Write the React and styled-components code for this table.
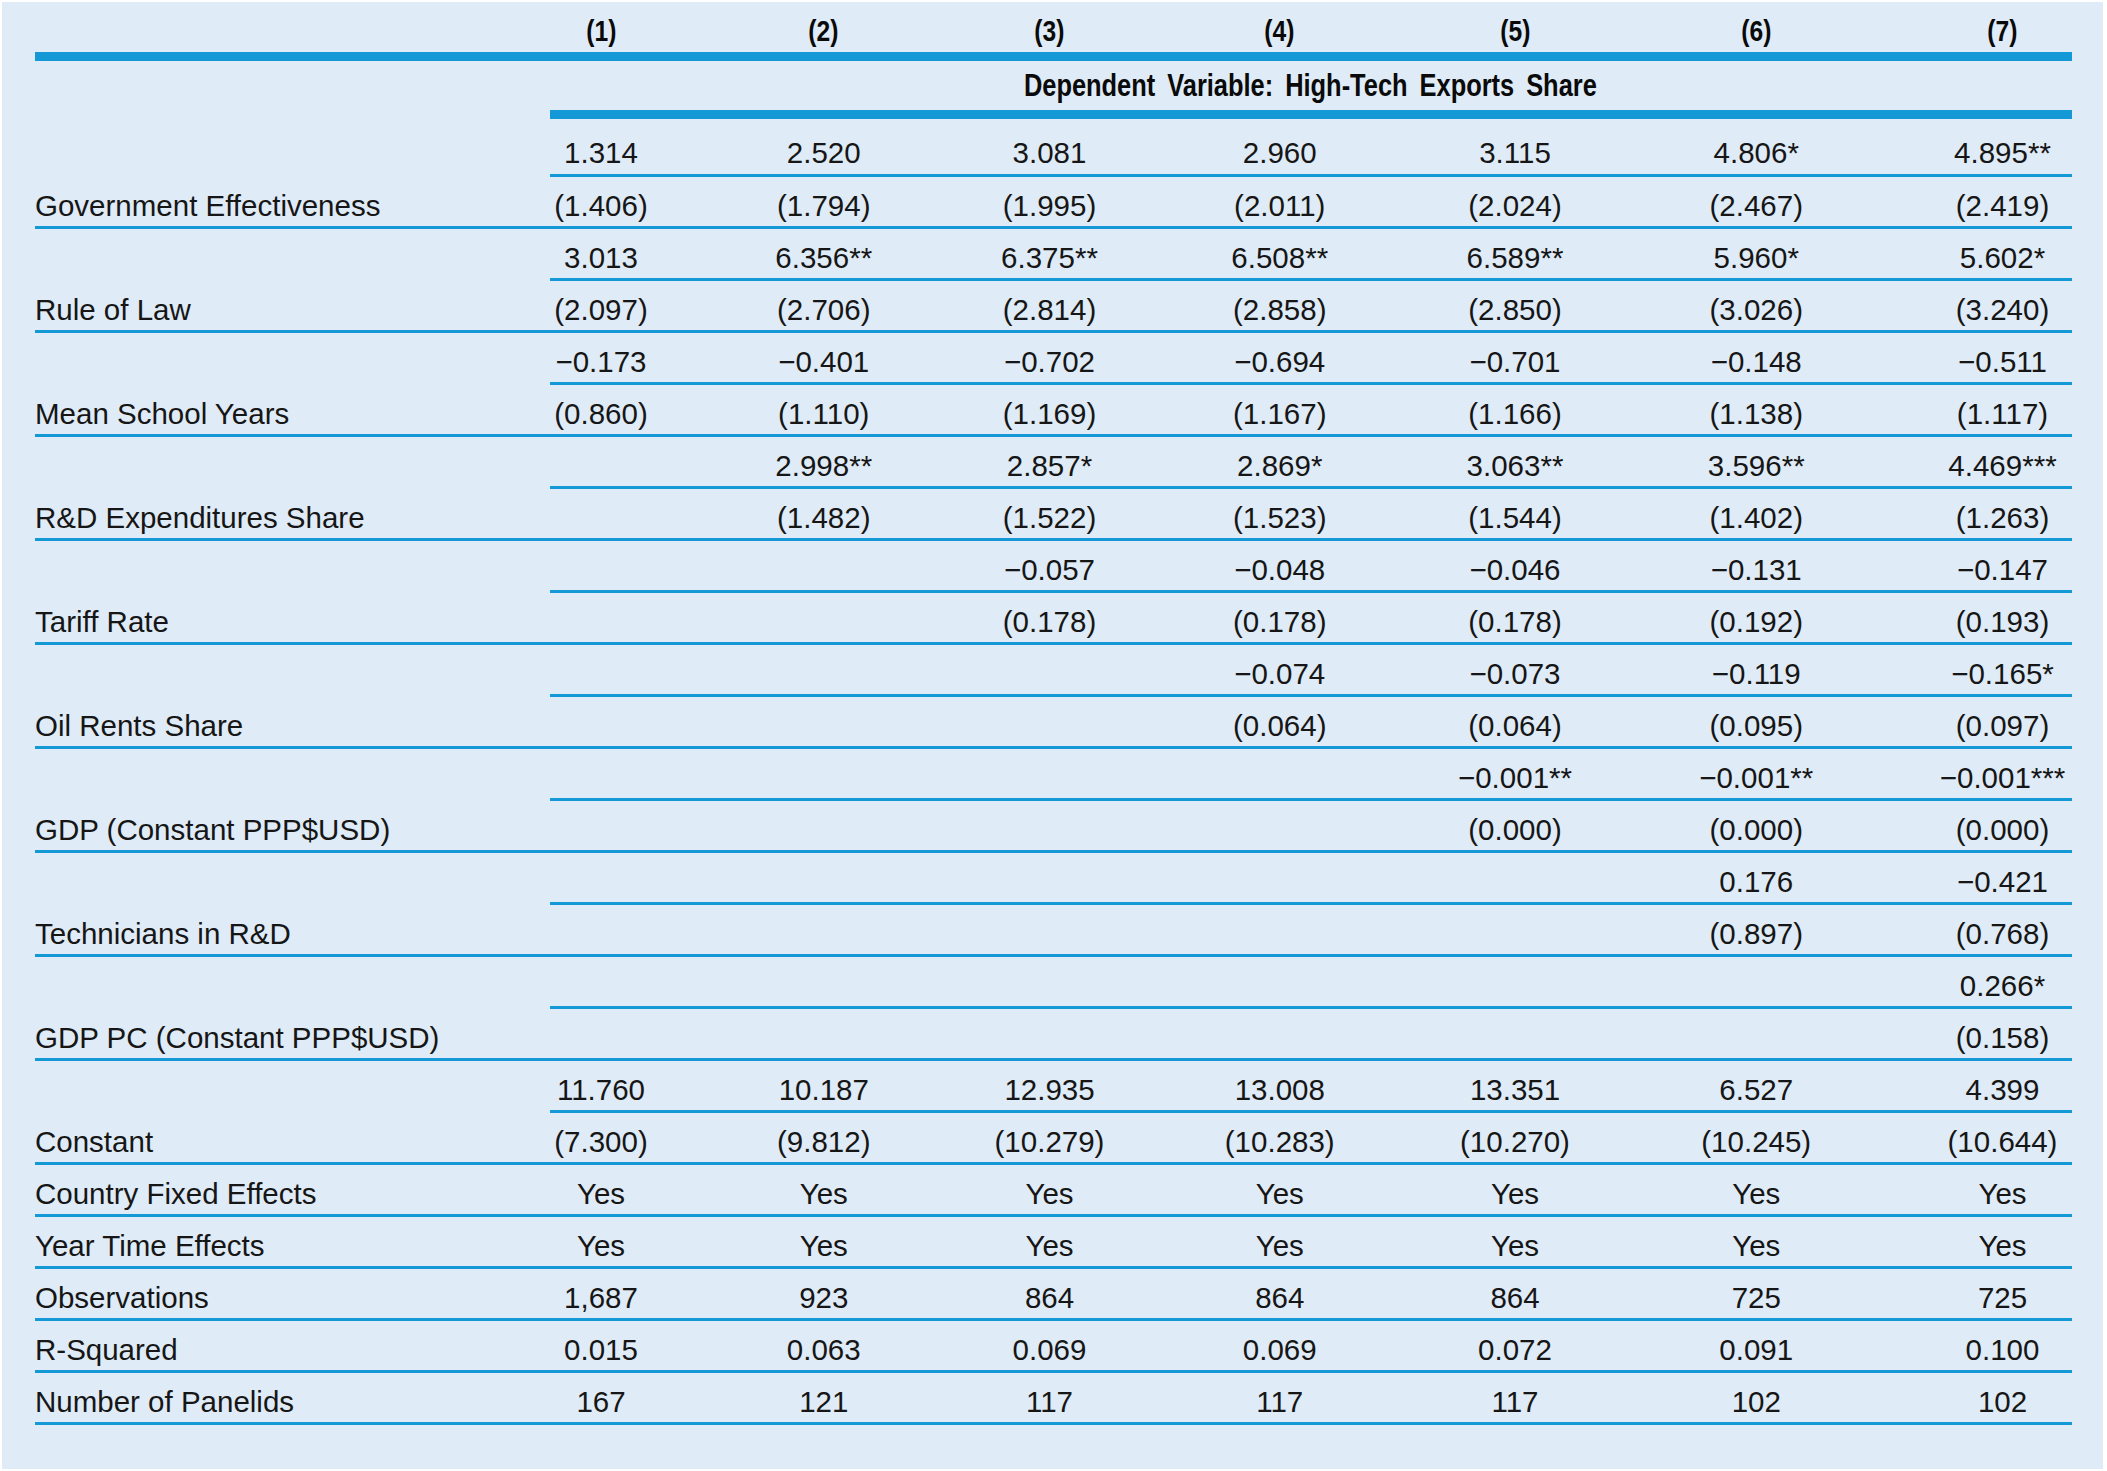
import React from 'react';
import styled, { createGlobalStyle } from 'styled-components';

const BLUE = '#1499d6';
const COLS = '515px 162px 223.5px 228px 232.5px 238px 244.5px 193px';

const GlobalStyle = createGlobalStyle`
  html, body {
    margin: 0;
    padding: 0;
    background: #ffffff;
  }
  body {
    font-family: "Liberation Sans", Arial, sans-serif;
  }
`;

const Panel = styled.div`
  box-sizing: border-box;
  width: 2101px;
  height: 1467px;
  margin: 2px;
  padding-left: 33px;
  background: #dfebf6;
`;

const Row = styled.div`
  display: grid;
  grid-template-columns: ${COLS};
  width: 2036.5px;
  height: ${p => p.$h}px;
  --rule: ${p => p.$rule}px;
  --pt: ${p => p.$pt}px;
`;

const LabelCell = styled.div`
  box-sizing: border-box;
  display: flex;
  align-items: center;
  padding-top: var(--pt);
  border-bottom: var(--rule) solid ${p => (p.$ruled ? BLUE : 'transparent')};
  font-size: 29.5px;
  color: #161616;
  white-space: nowrap;
`;

const ValueCell = styled.div`
  box-sizing: border-box;
  display: flex;
  align-items: center;
  justify-content: center;
  padding-top: var(--pt);
  border-bottom: var(--rule) solid ${BLUE};
  font-size: 29.5px;
  color: #161616;
  white-space: nowrap;

  &:nth-child(2) {
    padding-right: 60px;
  }
  &:last-child {
    padding-left: 55px;
  }
`;

const HeadCell = styled(ValueCell)`
  font-weight: 700;
  font-size: 30px;
  color: #0a0a0a;
`;

const SpanCell = styled.div`
  grid-column: 2 / -1;
  box-sizing: border-box;
  display: flex;
  align-items: center;
  justify-content: center;
  border-bottom: var(--rule) solid ${BLUE};
  font-weight: 700;
  font-size: 31px;
  word-spacing: 6px;
  color: #0a0a0a;
  white-space: nowrap;
`;

const Condensed = styled.span`
  display: inline-block;
  transform: scaleX(${p => p.$x});
`;

const variables = [
  {
    name: 'Government Effectiveness',
    coef: ['1.314', '2.520', '3.081', '2.960', '3.115', '4.806*', '4.895**'],
    se: ['(1.406)', '(1.794)', '(1.995)', '(2.011)', '(2.024)', '(2.467)', '(2.419)'],
  },
  {
    name: 'Rule of Law',
    coef: ['3.013', '6.356**', '6.375**', '6.508**', '6.589**', '5.960*', '5.602*'],
    se: ['(2.097)', '(2.706)', '(2.814)', '(2.858)', '(2.850)', '(3.026)', '(3.240)'],
  },
  {
    name: 'Mean School Years',
    coef: ['−0.173', '−0.401', '−0.702', '−0.694', '−0.701', '−0.148', '−0.511'],
    se: ['(0.860)', '(1.110)', '(1.169)', '(1.167)', '(1.166)', '(1.138)', '(1.117)'],
  },
  {
    name: 'R&D Expenditures Share',
    coef: ['', '2.998**', '2.857*', '2.869*', '3.063**', '3.596**', '4.469***'],
    se: ['', '(1.482)', '(1.522)', '(1.523)', '(1.544)', '(1.402)', '(1.263)'],
  },
  {
    name: 'Tariff Rate',
    coef: ['', '', '−0.057', '−0.048', '−0.046', '−0.131', '−0.147'],
    se: ['', '', '(0.178)', '(0.178)', '(0.178)', '(0.192)', '(0.193)'],
  },
  {
    name: 'Oil Rents Share',
    coef: ['', '', '', '−0.074', '−0.073', '−0.119', '−0.165*'],
    se: ['', '', '', '(0.064)', '(0.064)', '(0.095)', '(0.097)'],
  },
  {
    name: 'GDP (Constant PPP$USD)',
    coef: ['', '', '', '', '−0.001**', '−0.001**', '−0.001***'],
    se: ['', '', '', '', '(0.000)', '(0.000)', '(0.000)'],
  },
  {
    name: 'Technicians in R&D',
    coef: ['', '', '', '', '', '0.176', '−0.421'],
    se: ['', '', '', '', '', '(0.897)', '(0.768)'],
  },
  {
    name: 'GDP PC (Constant PPP$USD)',
    coef: ['', '', '', '', '', '', '0.266*'],
    se: ['', '', '', '', '', '', '(0.158)'],
  },
  {
    name: 'Constant',
    coef: ['11.760', '10.187', '12.935', '13.008', '13.351', '6.527', '4.399'],
    se: ['(7.300)', '(9.812)', '(10.279)', '(10.283)', '(10.270)', '(10.245)', '(10.644)'],
  },
];

const summary = [
  { name: 'Country Fixed Effects', values: Array(7).fill('Yes') },
  { name: 'Year Time Effects', values: Array(7).fill('Yes') },
  { name: 'Observations', values: ['1,687', '923', '864', '864', '864', '725', '725'] },
  { name: 'R-Squared', values: ['0.015', '0.063', '0.069', '0.069', '0.072', '0.091', '0.100'] },
  { name: 'Number of Panelids', values: ['167', '121', '117', '117', '117', '102', '102'] },
];

const DataRow = ({ label, values, full, first }) => (
  <Row $h={first ? 58 : 52} $pt={first ? 13 : 9} $rule={3}>
    <LabelCell $ruled={full}>{label}</LabelCell>
    {values.map((v, i) => (
      <ValueCell key={i}>{v}</ValueCell>
    ))}
  </Row>
);

export default function App() {
  return (
    <>
      <GlobalStyle />
      <Panel>
        <Row $h={59} $pt={8} $rule={9}>
          <LabelCell $ruled />
          {[1, 2, 3, 4, 5, 6, 7].map(n => (
            <HeadCell key={n}>
              <Condensed $x={0.82}>({n})</Condensed>
            </HeadCell>
          ))}
        </Row>
        <Row $h={58} $pt={0} $rule={9}>
          <LabelCell />
          <SpanCell>
            <Condensed $x={0.82}>Dependent Variable: High-Tech Exports Share</Condensed>
          </SpanCell>
        </Row>
        {variables.map((v, i) => (
          <React.Fragment key={v.name}>
            <DataRow values={v.coef} first={i === 0} />
            <DataRow label={v.name} values={v.se} full />
          </React.Fragment>
        ))}
        {summary.map(s => (
          <DataRow key={s.name} label={s.name} values={s.values} full />
        ))}
      </Panel>
    </>
  );
}
